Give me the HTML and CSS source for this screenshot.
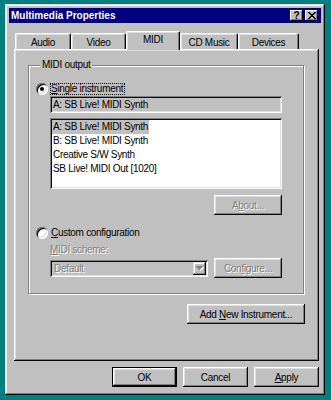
FILE: index.html
```html
<!DOCTYPE html>
<html lang="en">
  <head>
    <meta charset="UTF-8" />
    <title>Multimedia Properties</title>
    <link rel="stylesheet" href="styles.css">
  </head>
  <body>
    <div class="window">
      <div class="titlebar">
        <span class="title">Multimedia Properties</span>
        <div class="title-buttons">
          <span class="tbtn help">?</span>
          <span class="tbtn close">
            <svg width="8" height="7" viewBox="0 0 8 7"><path d="M0 0h2v1H0zM6 0h2v1H6zM1 1h2v1H1zM5 1h2v1H5zM2 2h4v1H2zM3 3h2v1H3zM2 4h4v1H2zM1 5h2v1H1zM5 5h2v1H5zM0 6h2v1H0zM6 6h2v1H6z" fill="#000"/></svg>
          </span>
        </div>
      </div>

      <div class="content">
        <div class="tabs">
          <div class="tab audio">Audio</div>
          <div class="tab video">Video</div>
          <div class="tab midi active">MIDI</div>
          <div class="tab cd">CD Music</div>
          <div class="tab devices">Devices</div>
        </div>

        <div class="panel">
          <fieldset class="group">
            <legend>MIDI output</legend>

            <div class="radio-row">
              <span class="radio checked"></span>
              <span class="radio-label focus"><u>S</u>ingle instrument</span>
            </div>

            <div class="indent">
              <div class="field">A: SB Live! MIDI Synth</div>
              <div class="list">
                <div class="item"><span class="sel">A: SB Live! MIDI Synth</span></div>
                <div class="item">B: SB Live! MIDI Synth</div>
                <div class="item">Creative S/W Synth</div>
                <div class="item">SB Live! MIDI Out [1020]</div>
              </div>
              <div class="btn-row">
                <button class="btn small disabled">A<u>b</u>out...</button>
              </div>
            </div>

            <div class="radio-row custom">
              <span class="radio"></span>
              <span class="radio-label"><u>C</u>ustom configuration</span>
            </div>

            <div class="indent">
              <div class="scheme-label disabled"><u>M</u>IDI scheme:</div>
              <div class="scheme-row">
                <div class="combo">
                  <span class="combo-text disabled">Default</span>
                  <span class="combo-btn">
                    <svg width="8" height="5" viewBox="0 0 8 5"><path d="M1 1h7v1H1zM2 2h5v1H2zM3 3h3v1H3zM4 4h1v1H4z" fill="#fff"/><path d="M0 0h7v1H0zM1 1h5v1H1zM2 2h3v1H2zM3 3h1v1H3z" fill="#808080"/></svg>
                  </span>
                </div>
                <button class="btn small disabled">Con<u>f</u>igure...</button>
              </div>
            </div>
          </fieldset>

          <div class="add-row">
            <button class="btn add">Add <u>N</u>ew Instrument...</button>
          </div>
        </div>

        <div class="dialog-buttons">
          <button class="btn default">OK</button>
          <button class="btn">Cancel</button>
          <button class="btn"><u>A</u>pply</button>
        </div>
      </div>
    </div>
  </body>
</html>
```

FILE: styles.css
```css
html {
  height: 100%;
}
body {
  margin: 0;
  height: 100%;
  background-color: #008080;
  font-family: "Liberation Sans", Arial, sans-serif;
  font-size: 10px;
  letter-spacing: -0.3px;
  color: #000;
}
u {
  text-decoration: underline;
  text-underline-offset: 1px;
}

/* window frame */
.window {
  box-sizing: border-box;
  margin: 4px 0 0 5px;
  width: 320px;
  height: 391px;
  padding: 4px;
  background-color: #c0c0c0;
  box-shadow: inset -1px -1px #0a0a0a, inset 1px 1px #dfdfdf,
    inset -2px -2px #808080, inset 2px 2px #fff;
  display: flex;
  flex-direction: column;
}
.titlebar {
  height: 15px;
  background-color: #000080;
  display: flex;
  align-items: center;
  justify-content: space-between;
  padding: 0 3px 0 2px;
}
.title {
  color: #fff;
  font-weight: bold;
  letter-spacing: 0;
}
.title-buttons {
  display: flex;
  gap: 2px;
}
.tbtn {
  box-sizing: border-box;
  width: 13px;
  height: 11px;
  background-color: #c0c0c0;
  box-shadow: inset -1px -1px #0a0a0a, inset 1px 1px #fff,
    inset -2px -2px #808080;
  display: flex;
  align-items: center;
  justify-content: center;
  font-weight: bold;
  font-size: 10px;
  letter-spacing: 0;
  line-height: 11px;
}
.tbtn svg {
  display: block;
}

/* content */
.content {
  margin: 8px 2px 0 5px;
  display: flex;
  flex-direction: column;
}
.tabs {
  height: 18px;
  display: flex;
  align-items: flex-end;
  padding-left: 1px;
}
.tab {
  box-sizing: border-box;
  height: 16px;
  background-color: #c0c0c0;
  border-top: 1px solid #fff;
  border-left: 1px solid #fff;
  border-right: 1px solid #000;
  border-radius: 2px 2px 0 0;
  box-shadow: inset -1px 0 #808080, inset 1px 1px #dfdfdf;
  display: flex;
  align-items: center;
  justify-content: center;
  padding-top: 1px;
}
.audio { width: 56px; }
.video { width: 55px; }
.midi { width: 54px; }
.cd { width: 58px; }
.devices { width: 61px; }
.tab.active {
  position: relative;
  z-index: 1;
  height: 19px;
  margin-bottom: -1px;
  padding-top: 0;
  padding-bottom: 3px;
}

.panel {
  box-sizing: border-box;
  height: 312px;
  padding: 10px 0 0 14px;
  box-shadow: inset -1px -1px #0a0a0a, inset 1px 1px #fff,
    inset -2px -2px #808080, inset 2px 2px #dfdfdf;
  display: flex;
  flex-direction: column;
}

/* group box */
.group {
  box-sizing: border-box;
  width: 276px;
  margin: 0;
  padding: 12px 21px 15px 7px;
  border: 1px solid #808080;
  box-shadow: inset 1px 1px #fff, 1px 1px #fff;
  min-width: 0;
}
.group legend {
  padding: 0 2px;
  margin-left: 4px;
  line-height: 12px;
  background-color: #c0c0c0;
}

.radio-row {
  height: 12px;
  display: flex;
  align-items: center;
}
.radio-row.custom {
  margin-top: 12px;
}
.radio {
  position: relative;
  width: 12px;
  height: 12px;
  border-radius: 50%;
  background-color: #fff;
  box-shadow: inset 1px 1px #808080, inset -1px -1px #fff,
    inset 2px 2px #0a0a0a, inset -2px -2px #dfdfdf;
}
.radio.checked::after {
  content: "";
  position: absolute;
  left: 4px;
  top: 4px;
  width: 4px;
  height: 4px;
  border-radius: 50%;
  background-color: #000;
}
.radio-label {
  margin-left: 1px;
  padding: 0 1px 0 1px;
  line-height: 12px;
  margin-left: 2px;
}
.radio-label.focus {
  outline: 1px dotted #000;
  outline-offset: -1px;
  padding: 0 2px 0 1px;
}

.indent {
  margin-left: 14px;
  display: flex;
  flex-direction: column;
}
.field {
  box-sizing: border-box;
  height: 17px;
  margin-top: 1px;
  padding: 0 3px;
  line-height: 17px;
  box-shadow: inset 1px 1px #808080, inset -1px -1px #fff,
    inset 2px 2px #0a0a0a, inset -2px -2px #dfdfdf;
}
.list {
  box-sizing: border-box;
  height: 71px;
  margin-top: 5px;
  padding: 2px;
  background-color: #fff;
  box-shadow: inset 1px 1px #808080, inset -1px -1px #fff,
    inset 2px 2px #0a0a0a, inset -2px -2px #dfdfdf;
}
.item {
  height: 14px;
  line-height: 14px;
  padding-left: 1px;
}
.sel {
  display: inline-block;
  background-color: #c0c0c0;
  padding: 0 1px;
  margin-left: -1px;
}
.btn-row {
  display: flex;
  justify-content: flex-end;
  margin-top: 6px;
}

.scheme-label {
  margin-top: 5px;
  line-height: 12px;
}
.scheme-row {
  margin-top: 2px;
  display: flex;
  align-items: center;
  justify-content: space-between;
}
.combo {
  box-sizing: border-box;
  width: 158px;
  height: 17px;
  padding: 2px 2px 2px 4px;
  display: flex;
  align-items: center;
  justify-content: space-between;
  box-shadow: inset 1px 1px #808080, inset -1px -1px #fff,
    inset 2px 2px #0a0a0a, inset -2px -2px #dfdfdf;
}
.combo-btn {
  box-sizing: border-box;
  width: 13px;
  height: 13px;
  display: flex;
  align-items: center;
  justify-content: center;
  box-shadow: inset -1px -1px #0a0a0a, inset 1px 1px #dfdfdf,
    inset -2px -2px #808080, inset 2px 2px #fff;
}
.combo-btn svg {
  display: block;
}

.disabled {
  color: #808080;
  text-shadow: 1px 1px #fff;
}

/* buttons */
.btn {
  box-sizing: border-box;
  height: 20px;
  width: 65px;
  padding: 0;
  border: 0;
  background-color: #c0c0c0;
  font-family: inherit;
  font-size: 10px;
  letter-spacing: -0.3px;
  color: #000;
  box-shadow: inset -1px -1px #0a0a0a, inset 1px 1px #fff,
    inset -2px -2px #808080, inset 2px 2px #dfdfdf;
}
.btn.small {
  width: 68px;
}
.btn.disabled {
  color: #808080;
}
.btn.default {
  border: 1px solid #000;
}
.add-row {
  width: 277px;
  display: flex;
  justify-content: flex-end;
  margin-top: 10px;
}
.btn.add {
  width: 118px;
}
.dialog-buttons {
  margin-top: 6px;
  display: flex;
  justify-content: flex-end;
  gap: 6px;
}
.dialog-buttons .btn {
  width: 65px;
}
```
